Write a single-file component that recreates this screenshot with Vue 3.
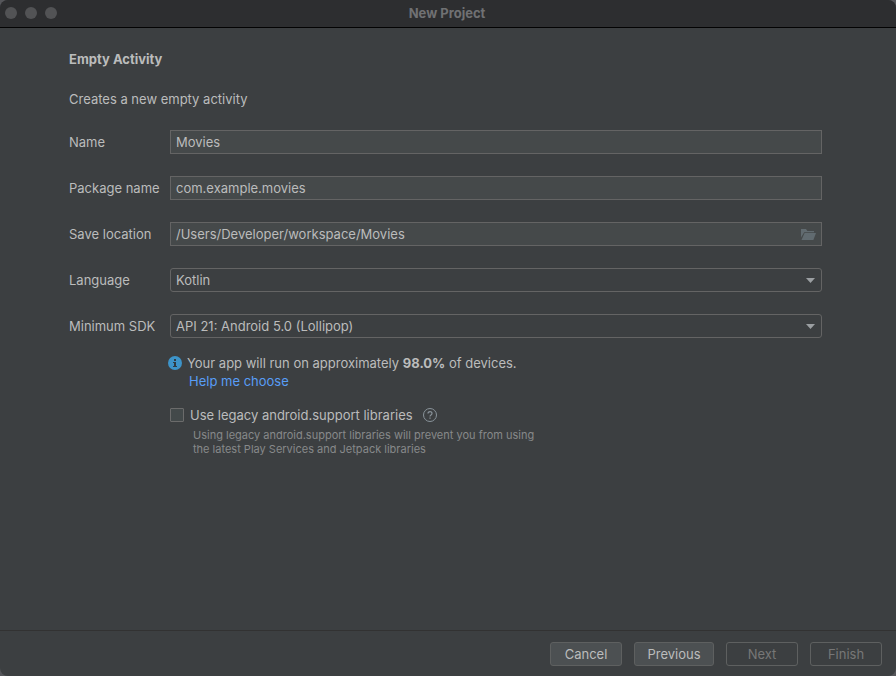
<script setup>
import { ref } from 'vue'

const name = ref('Movies')
const packageName = ref('com.example.movies')
const location = ref('/Users/Developer/workspace/Movies')
const language = ref('Kotlin')
const sdk = ref('API 21: Android 5.0 (Lollipop)')
const legacy = ref(false)
</script>

<template>
  <form class="window" @submit.prevent>
    <header class="titlebar">
      <div class="lights"><i></i><i></i><i></i></div>
      <h1>New Project</h1>
    </header>

    <main class="content">
      <h2>Empty Activity</h2>
      <p class="intro">Creates a new empty activity</p>

      <div class="fields">
        <label for="name">Name</label>
        <div class="control"><input id="name" v-model="name" type="text" /></div>

        <label for="package">Package name</label>
        <div class="control"><input id="package" v-model="packageName" type="text" /></div>

        <label for="location">Save location</label>
        <div class="control">
          <input id="location" v-model="location" type="text" />
          <button class="browse" type="button" aria-label="Browse">
            <svg width="15" height="12" viewBox="0 0 15 12">
              <path d="M0 9.6V1H5L6.4 3H13V4.2H3.2Z" />
              <path d="M3.6 5H15L12.4 12H0.5Z" />
            </svg>
          </button>
        </div>

        <label for="language">Language</label>
        <div class="control combo">
          <select id="language" v-model="language">
            <option>Kotlin</option>
          </select>
          <svg class="arrow" width="9" height="5" viewBox="0 0 9 5"><path d="M0 0H9L4.5 5Z" /></svg>
        </div>

        <label for="sdk">Minimum SDK</label>
        <div class="control combo">
          <select id="sdk" v-model="sdk">
            <option>API 21: Android 5.0 (Lollipop)</option>
          </select>
          <svg class="arrow" width="9" height="5" viewBox="0 0 9 5"><path d="M0 0H9L4.5 5Z" /></svg>
        </div>
      </div>

      <div class="notes">
        <div class="info">
          <svg width="14" height="14" viewBox="0 0 14 14">
            <circle cx="7" cy="7" r="7" fill="#3d94c9" />
            <path d="M6 3H8V5H6ZM5 6H8V10H9V11H5V10H6V7H5Z" fill="#303c43" />
          </svg>
          <span>Your app will run on approximately <b>98.0%</b> of devices.</span>
        </div>
        <a class="help" href="#">Help me choose</a>

        <div class="legacy">
          <input id="legacy" v-model="legacy" type="checkbox" />
          <label for="legacy">Use legacy android.support libraries</label>
          <svg width="14" height="14" viewBox="0 0 14 14" fill="none">
            <circle cx="7" cy="7" r="6.5" stroke="#89939a" />
            <path d="M5 5.6C5 2.9 9 2.9 9 5.4C9 6.9 7 6.9 7 8.4" stroke="#89939a" stroke-width="1.2" />
            <path d="M6.4 9.5H7.6V10.7H6.4Z" fill="#89939a" />
          </svg>
        </div>
        <p class="hint">
          Using legacy android.support libraries will prevent you from using<br />
          the latest Play Services and Jetpack libraries
        </p>
      </div>
    </main>

    <footer class="footer">
      <button type="button">Cancel</button>
      <button class="wide" type="button">Previous</button>
      <button type="button" disabled>Next</button>
      <button type="button" disabled>Finish</button>
    </footer>
  </form>
</template>

<style>
body {
  margin: 0;
  background: #55565a;
}
</style>

<style scoped>
.window {
  display: flex;
  flex-direction: column;
  min-height: 100vh;
  border-radius: 8px;
  overflow: hidden;
  background: #3c3f41;
  color: #bbbcbc;
  font: 13px/16px Inter, "Liberation Sans", sans-serif;
}
.window * {
  box-sizing: border-box;
}
.titlebar {
  display: grid;
  grid-template-columns: 1fr auto 1fr;
  align-items: center;
  height: 28px;
  padding: 0 7px 2px 5px;
  background: #2d2e30;
  border-bottom: 1px solid #030303;
}
.lights {
  display: flex;
  gap: 8px;
}
.lights i {
  width: 12px;
  height: 12px;
  border-radius: 50%;
  background: #525355;
}
h1,
h2,
p {
  margin: 0;
  font-size: 13px;
}
h1 {
  color: #707173;
  font-weight: 700;
}
.content {
  flex: 1;
  padding: 23px 74px 24px 69px;
}
h2 {
  font-weight: 700;
}
.intro {
  margin-top: 24px;
}
.fields {
  display: grid;
  grid-template-columns: 101px 1fr;
  row-gap: 22px;
  align-items: center;
  margin-top: 23px;
}
.control {
  display: flex;
  align-items: center;
  height: 24px;
  border: 1px solid #646464;
  background: #45494a;
}
.control input,
.control select {
  flex: 1;
  min-width: 0;
  height: 22px;
  padding: 0 5px;
  border: 0;
  outline: 0;
  background: transparent;
  color: inherit;
  font: inherit;
  appearance: none;
}
.control.combo {
  display: grid;
  grid-template-columns: 1fr;
  border-radius: 3px;
  background: #3c3f41;
}
.combo select,
.combo .arrow {
  grid-area: 1 / 1;
}
.arrow {
  justify-self: end;
  margin-right: 6px;
  fill: #9b9fa2;
  pointer-events: none;
}
.browse {
  display: flex;
  padding: 0 5px;
  border: 0;
  background: none;
  fill: #616b70;
}
.notes {
  margin-top: 17px;
  padding-left: 99px;
}
.info {
  display: flex;
  align-items: center;
  gap: 5px;
}
.help {
  display: block;
  width: max-content;
  margin: 2px 0 0 21px;
  color: #589df6;
  text-decoration: none;
}
.legacy {
  display: flex;
  align-items: center;
  margin: 18px 0 0 2px;
}
.legacy input {
  width: 14px;
  height: 14px;
  margin: 0;
  border: 1px solid #6b6b6b;
  border-radius: 1px;
  background: #43494a;
  appearance: none;
}
.legacy input:checked {
  background: #589df6;
}
.legacy label {
  margin: 0 10px 0 6px;
}
.hint {
  margin: 5px 0 0 25px;
  color: #87898a;
  font-size: 11px;
  line-height: 14px;
}
.footer {
  display: flex;
  justify-content: flex-end;
  gap: 12px;
  padding: 11px 14px 10px;
  border-top: 1px solid #323232;
}
.footer button {
  width: 72px;
  height: 24px;
  padding: 0;
  border: 1px solid #5e6060;
  border-radius: 3px;
  background: #4c5052;
  color: #bbbcbc;
  font: inherit;
}
.footer button.wide {
  width: 80px;
}
.footer button:disabled {
  background: transparent;
  color: #777777;
}
</style>
